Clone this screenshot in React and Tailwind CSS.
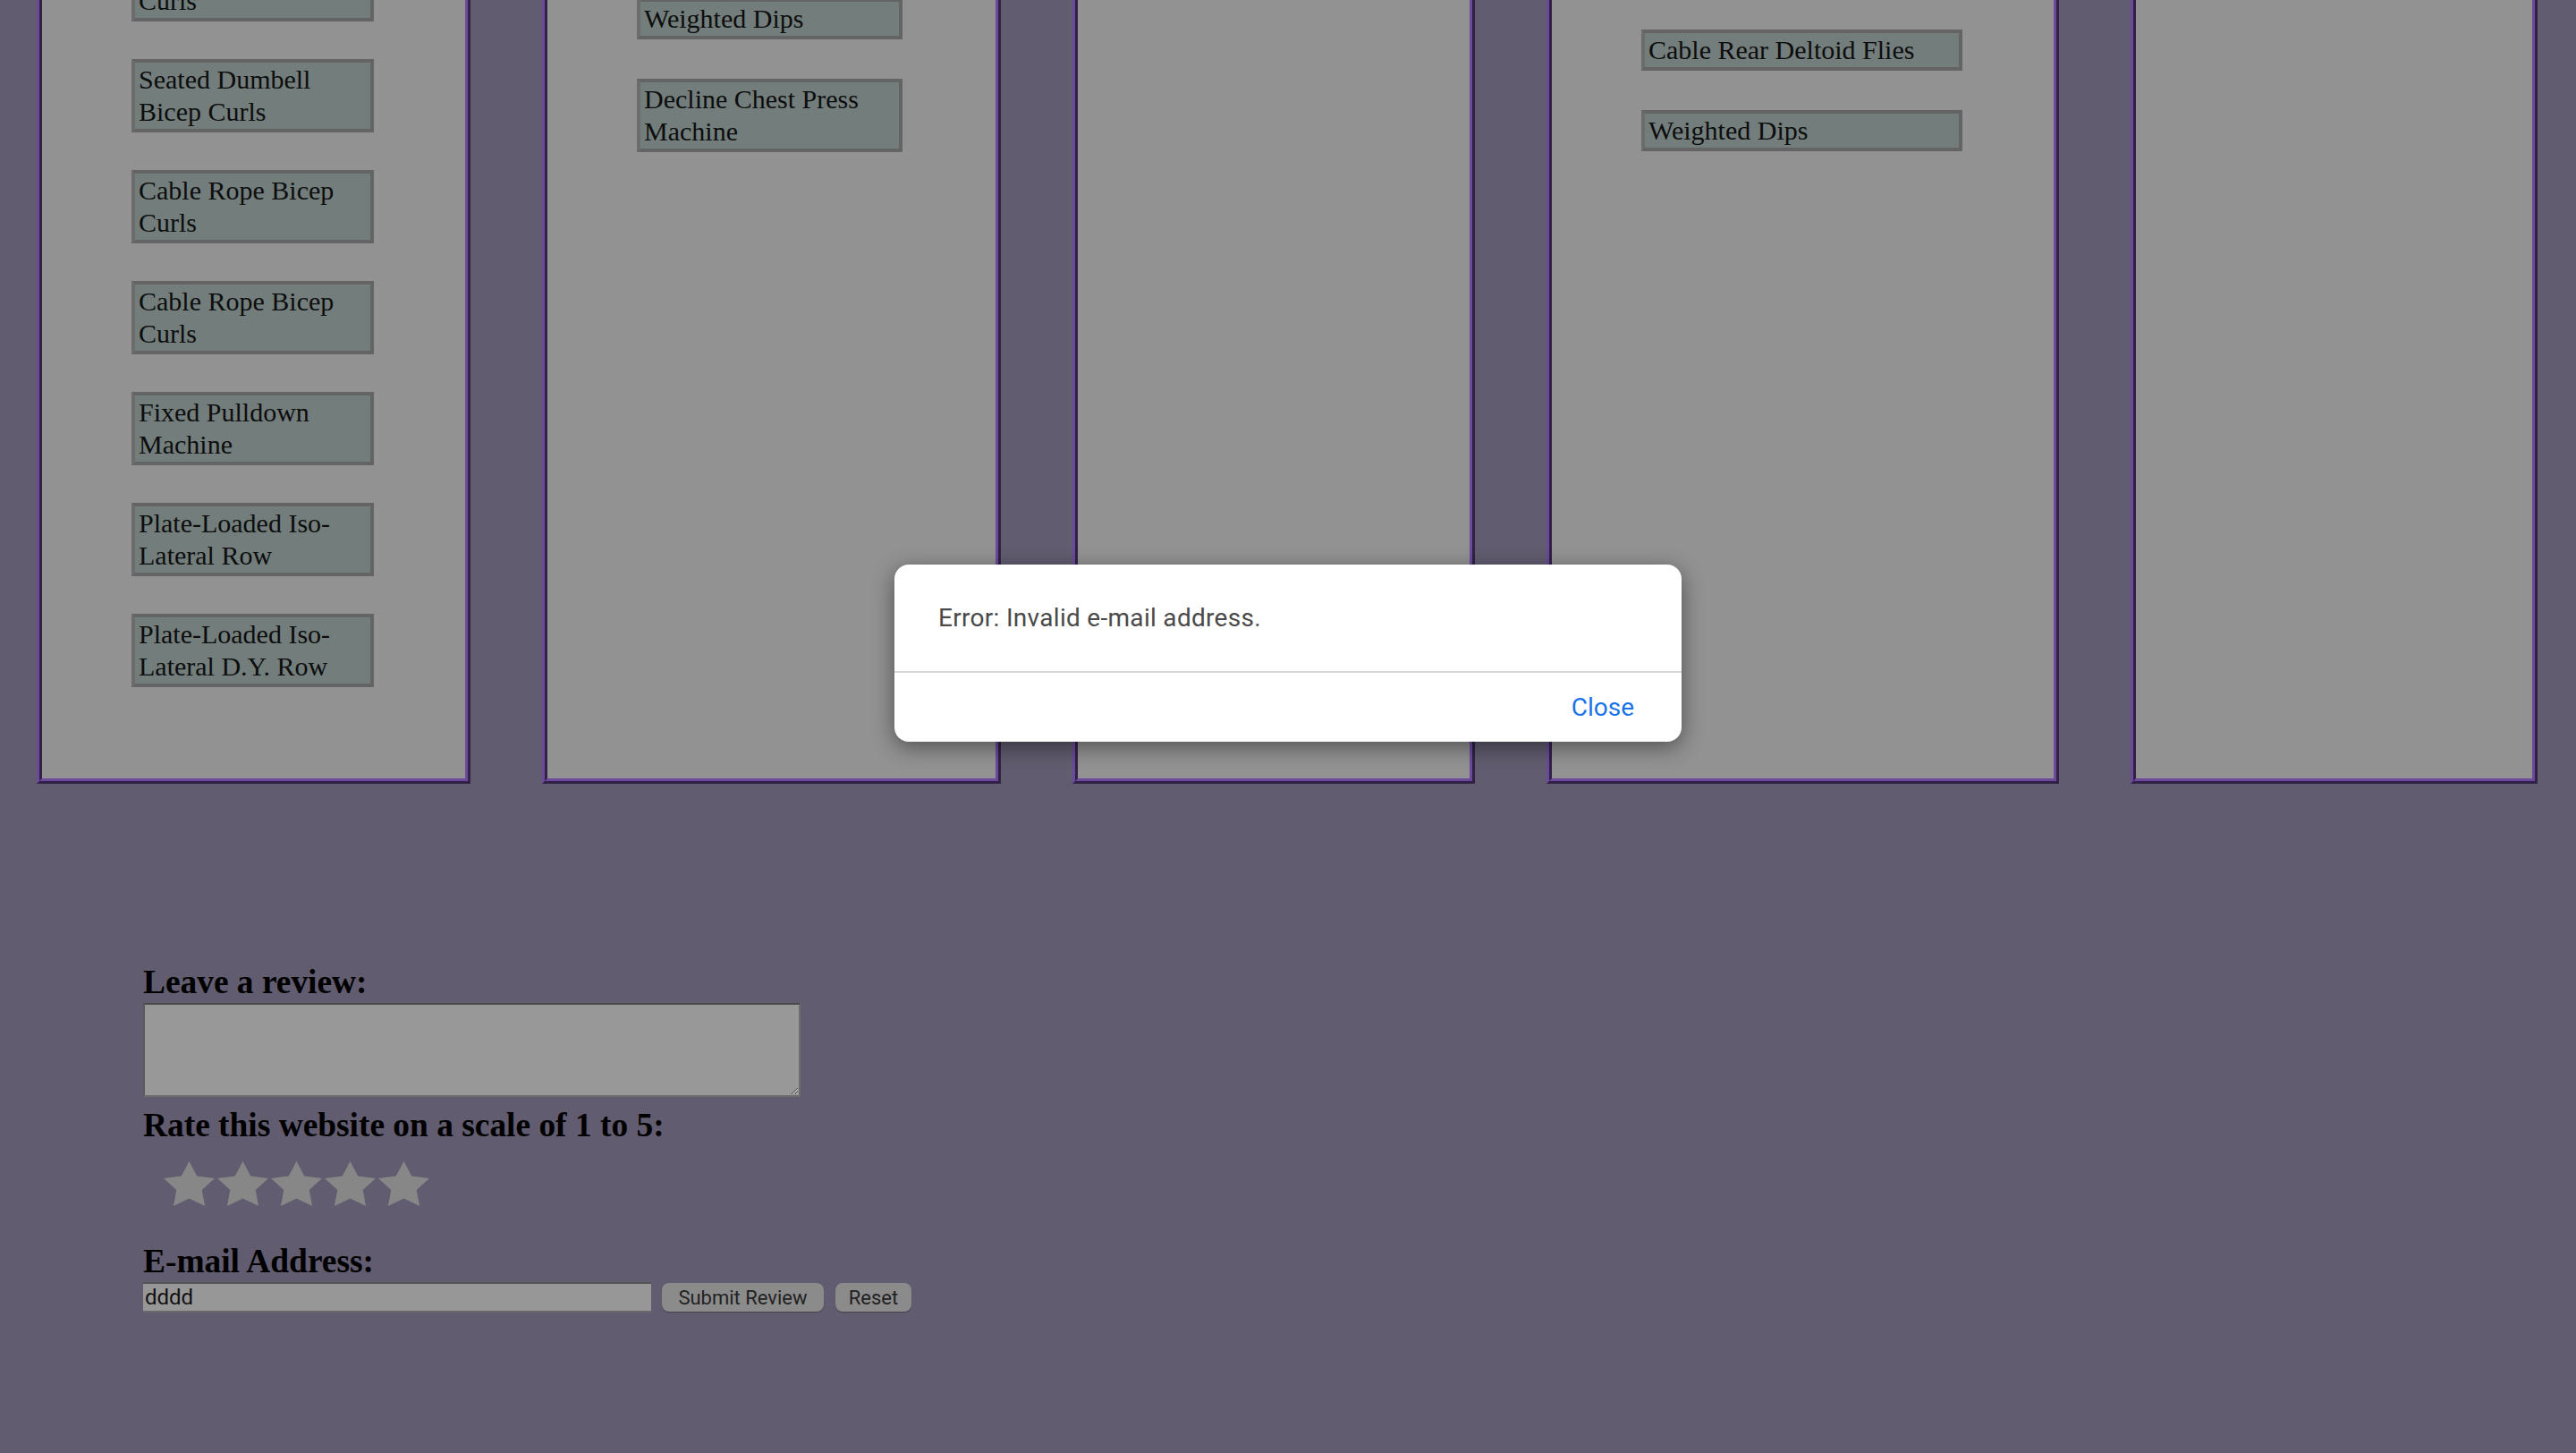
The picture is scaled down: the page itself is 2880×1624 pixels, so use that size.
import React from 'react';

const panels = [
  {
    width: 'w-[485px]',
    btnWidth: 'w-[271px]',
    top: 'pt-[136px]',
    gap: 'gap-[42px]',
    items: [
      'Cable Rope Bicep Curls',
      'Seated Dumbell Bicep Curls',
      'Cable Rope Bicep Curls',
      'Cable Rope Bicep Curls',
      'Fixed Pulldown Machine',
      'Plate-Loaded Iso-Lateral Row',
      'Plate-Loaded Iso-Lateral D.Y. Row',
    ],
  },
  {
    width: 'w-[513px]',
    btnWidth: 'w-[297px]',
    top: 'pt-[192px]',
    gap: 'gap-[44px]',
    items: ['Weighted Dips', 'Decline Chest Press Machine'],
  },
  { width: 'w-[450px]', btnWidth: '', top: '', gap: '', items: [] },
  {
    width: 'w-[573px]',
    btnWidth: 'w-[359px]',
    top: 'pt-[227px]',
    gap: 'gap-[44px]',
    items: ['Cable Rear Deltoid Flies', 'Weighted Dips'],
  },
  { width: 'w-[455px]', btnWidth: '', top: '', gap: '', items: [] },
];

function Star() {
  return (
    <svg viewBox="2 2 20 19.02" preserveAspectRatio="none" className="w-[57px] h-[50px]">
      <polygon
        points="12,2 15.09,8.26 22,9.27 17,14.14 18.18,21.02 12,17.77 5.82,21.02 7,14.14 2,9.27 8.91,8.26"
        fill="#878787"
      />
    </svg>
  );
}

function Panel({ panel }) {
  return (
    <div
      className={`${panel.width} h-full bg-[#929292] border-[6px] border-[#6b4a9b] [border-style:ridge]`}
    >
      <div className={`flex flex-col items-start pl-[100px] ${panel.top} ${panel.gap}`}>
        {panel.items.map((item, i) => (
          <button
            key={i}
            className={`${panel.btnWidth} text-left bg-[#727d7c] border-[4px] border-[#646464] border-l-[#6c6c6c] pl-[4px] py-[1px] text-[30px] leading-[36px] text-[#0d0d0d] font-['Liberation_Serif',serif]`}
          >
            {item}
          </button>
        ))}
      </div>
    </div>
  );
}

export default function App() {
  return (
    <div className="relative h-screen overflow-hidden bg-[#615c6f] font-['Liberation_Serif',serif] text-black">
      {/* Exercise columns (page is scrolled, tops are cut off) */}
      <div className="flex gap-[80px] pl-[41px] -mt-[200px] h-[1076px]">
        {panels.map((p, i) => (
          <Panel key={i} panel={p} />
        ))}
      </div>

      {/* Review form */}
      <div className="mt-[200px] pl-[160px]">
        <h3 className="text-[37.4px] leading-[43px] font-bold">Leave a review:</h3>
        <textarea className="block resize mt-[2px] w-[735px] h-[105px] bg-[#989898] border-[2px] border-[#6e6e6e] border-t-[#4a4a4a] border-l-[#5a5a5a] outline-none" />
        <h3 className="mt-[10px] text-[37.4px] leading-[43px] font-bold">
          Rate this website on a scale of 1 to 5:
        </h3>
        <div className="flex gap-[3px] pl-[23px] mt-[19px]">
          <Star />
          <Star />
          <Star />
          <Star />
          <Star />
        </div>
        <h3 className="mt-[40px] text-[37.4px] leading-[43px] font-bold">E-mail Address:</h3>
        <div className="flex items-center mt-[2px] font-['Roboto',sans-serif]">
          <input
            defaultValue="dddd"
            className="w-[568px] h-[34px] bg-[#979797] border-t-[2px] border-b-[2px] border-t-[#555] border-b-[#6a6a6a] px-[2px] text-[24px] text-[#111] outline-none"
          />
          <button className="ml-[12px] w-[181px] h-[32px] rounded-[8px] bg-[#8b8b8b] shadow-[0_1px_1px_rgba(0,0,0,0.3)] text-[22px] text-[#222]">
            Submit Review
          </button>
          <button className="ml-[13px] w-[85px] h-[32px] rounded-[8px] bg-[#8b8b8b] shadow-[0_1px_1px_rgba(0,0,0,0.3)] text-[22px] text-[#222]">
            Reset
          </button>
        </div>
      </div>

      {/* Alert dialog */}
      <div className="absolute left-[1000px] top-[631px] w-[880px] h-[198px] rounded-[16px] bg-white shadow-[0_6px_24px_rgba(0,0,0,0.45)] font-['Roboto',sans-serif] flex flex-col">
        <div className="h-[119px] flex items-center pl-[49px] text-[28px] text-[#4a4a4a] tracking-[0.3px]">
          Error: Invalid e-mail address.
        </div>
        <div className="h-[2px] bg-[#d6d6d6]" />
        <div className="flex-1 flex items-center justify-end pr-[53px]">
          <button className="text-[28px] text-[#1a73e8]">Close</button>
        </div>
      </div>
    </div>
  );
}
